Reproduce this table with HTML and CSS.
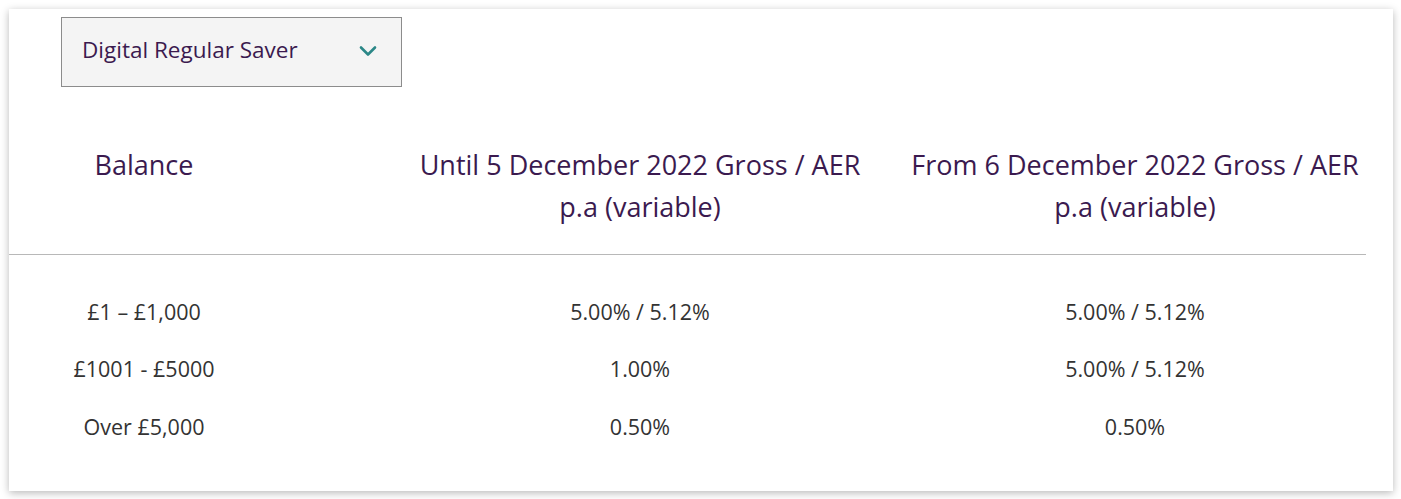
FILE: index.html
```html
<!DOCTYPE html>
<html lang="en">
<head>
    <meta charset="UTF-8">
    <meta name="viewport" content="width=device-width, initial-scale=1.0">
    <title>Digital Regular Saver rates</title>
    <link rel="stylesheet" href="styles.css">
</head>
<body>

<div class="rates-card">
    <div class="product-select">
        <span>Digital Regular Saver</span>
        <svg class="chevron" width="18" height="12" viewBox="0 0 18 12">
            <path d="M2 2.5 L9 9.5 L16 2.5" fill="none" stroke="#2b8787" stroke-width="2.6" stroke-linecap="round" stroke-linejoin="round"/>
        </svg>
    </div>

    <div class="rates-table">
        <div class="rates-head">
            <div class="col-balance">Balance</div>
            <div class="col-until">Until 5 December 2022 Gross / AER <span class="line">p.a (variable)</span></div>
            <div class="col-from">From 6 December 2022 Gross / AER <span class="line">p.a (variable)</span></div>
        </div>
        <div class="rates-body" id="ratesBody"></div>
    </div>
</div>

<script>
    const rows = [
        ['£1 – £1,000', '5.00% / 5.12%', '5.00% / 5.12%'],
        ['£1001 - £5000', '1.00%', '5.00% / 5.12%'],
        ['Over £5,000', '0.50%', '0.50%']
    ];
    const classes = ['col-balance', 'col-until', 'col-from'];

    // build the rate rows
    const body = document.getElementById('ratesBody');
    rows.forEach(row => {
        const line = document.createElement('div');
        line.className = 'rates-row';
        row.forEach((text, i) => {
            const cell = document.createElement('div');
            cell.className = classes[i];
            cell.textContent = text;
            line.appendChild(cell);
        });
        body.appendChild(line);
    });
</script>

</body>
</html>
```

FILE: styles.css
```css
body {
    margin: 0;
    background: #ffffff;
    font-family: "Open Sans", Lato, Arial, sans-serif;
}

.rates-card {
    margin: 9px 8px 8px 9px;
    width: 1384px;
    height: 482px;
    box-sizing: border-box;
    padding-top: 8px;
    background: #ffffff;
    box-shadow: 0 2px 8px rgba(0, 0, 0, 0.28);
}

.product-select {
    margin-left: 52px;
    width: 341px;
    height: 70px;
    box-sizing: border-box;
    padding: 0 24px 5px 20px;
    display: flex;
    align-items: center;
    justify-content: space-between;
    background: #f4f4f4;
    border: 1px solid #8c8c8c;
    color: #3b1a4f;
    font-size: 22.5px;
}

.chevron {
    margin-top: 3px;
}

/* five tracks: three columns with uneven gaps between them */
.rates-head,
.rates-row {
    display: grid;
    grid-template-columns: 270px 116px 490px 5px 490px;
    text-align: center;
}

.col-balance {
    grid-column: 1;
}

.col-until {
    grid-column: 3;
}

.col-from {
    grid-column: 5;
}

.rates-head {
    margin-top: 57px;
    padding-bottom: 26px;
    border-bottom: 1px solid #b8b8b8;
    width: 1357px;
    color: #3b1a4f;
    font-size: 27px;
    line-height: 42px;
}

.rates-head .line {
    display: block;
}

.rates-body {
    padding-top: 28px;
}

.rates-row {
    color: #333333;
    font-size: 21.5px;
    line-height: 57.3px;
}
```
